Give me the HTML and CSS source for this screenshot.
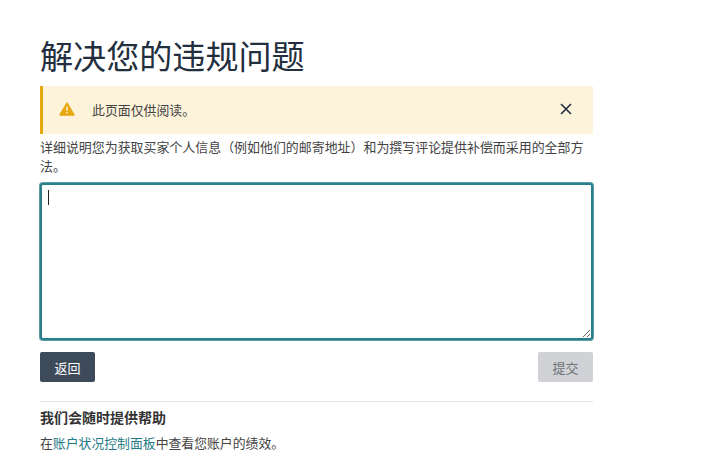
FILE: index.html
```html
<!DOCTYPE html>
<html lang="zh-CN">
<head>
  <meta charset="UTF-8">
  <title>解决您的违规问题</title>
  <link rel="stylesheet" href="styles.css">
</head>
<body>
  <main class="page-wrap">
    <h1>解决您的违规问题</h1>

    <div class="alert">
      <svg class="alert-icon" width="16" height="14" viewBox="0 0 18 16">
        <path d="M9 0.5c.4 0 .7.2.9.5l7.8 13.3c.4.7-.1 1.4-.9 1.4H1.2c-.8 0-1.3-.7-.9-1.4L8.1 1c.2-.3.5-.5.9-.5z" fill="#e9a70f"/>
        <rect x="8.2" y="5.2" width="1.6" height="5" fill="#fdf2d8"/>
        <rect x="8.2" y="11.4" width="1.6" height="1.7" fill="#fdf2d8"/>
      </svg>
      <span class="alert-text">此页面仅供阅读。</span>
      <button class="alert-close" aria-label="关闭">
        <svg width="12" height="12" viewBox="0 0 12 12">
          <path d="M1 1l10 10M11 1L1 11" stroke="#232f3e" stroke-width="1.6" fill="none"/>
        </svg>
      </button>
    </div>

    <label class="prompt" for="answer">详细说明您为获取买家个人信息（例如他们的邮寄地址）和为撰写评论提供补偿而采用的全部方法。</label>

    <div class="field">
      <textarea id="answer" autofocus></textarea>
      <span class="caret"></span>
    </div>

    <div class="actions">
      <button class="btn back">返回</button>
      <button class="btn submit" disabled>提交</button>
    </div>

    <section class="help">
      <h2>我们会随时提供帮助</h2>
      <p>在<a href="#">账户状况控制面板</a>中查看您账户的绩效。</p>
    </section>
  </main>
</body>
</html>
```

FILE: styles.css
```css
/* Basic reset and layout */
body, html {
    margin: 0;
    padding: 0;
    background-color: #fff;
    color: #232f3e;
    font-family: "Liberation Sans", "Noto Sans CJK SC", sans-serif;
}

.page-wrap {
    width: 553px;
    margin-left: 40px;
    padding-top: 38px;
}

h1 {
    margin: 0 0 9px;
    font-size: 33.1px;
    line-height: 39px;
    font-weight: 400;
    color: #232f3e;
}

/* Notice */
.alert {
    display: flex;
    align-items: center;
    height: 48px;
    box-sizing: border-box;
    padding: 0 21px 2px 16px;
    background-color: #fdf3da;
    border-left: 3px solid #e9a70f;
}

.alert-icon {
    margin-right: 17px;
}

.alert-text {
    flex: 1;
    font-size: 12.9px;
    color: #444;
}

.alert-close {
    display: flex;
    padding: 0;
    border: none;
    background: none;
}

/* Question */
.prompt {
    display: block;
    margin: 4px 0 7px;
    font-size: 12.95px;
    line-height: 19px;
    color: #444;
}

.field {
    position: relative;
    height: 157px;
}

textarea {
    display: block;
    width: 100%;
    height: 100%;
    box-sizing: border-box;
    padding: 5px 6px;
    border: 2px solid #2a7f8b;
    border-radius: 3px;
    box-shadow: 0 0 0 1px #5b9ea8;
    outline: none;
    font-size: 13px;
    caret-color: transparent;
}

.caret {
    position: absolute;
    left: 8px;
    top: 7px;
    width: 1px;
    height: 15px;
    background-color: #222;
}

/* Buttons */
.actions {
    display: flex;
    justify-content: space-between;
    margin-top: 12px;
}

.btn {
    height: 30px;
    width: 55px;
    padding: 0;
    border: none;
    border-radius: 2px;
    font-family: inherit;
    font-size: 13px;
}

.back {
    background-color: #3d4a5a;
    color: #fff;
}

.submit {
    background-color: #d0d2d5;
    color: #6f7378;
}

/* Help */
.help {
    margin-top: 19px;
    padding-top: 7px;
    border-top: 1px solid #e3e3e3;
}

.help h2 {
    margin: 0;
    font-size: 14px;
    line-height: 18px;
    font-weight: 700;
    color: #333;
}

.help p {
    margin: 8px 0 0;
    font-size: 12.85px;
    line-height: 18px;
    color: #444;
}

.help a {
    color: #1f7a85;
    text-decoration: none;
}
```
